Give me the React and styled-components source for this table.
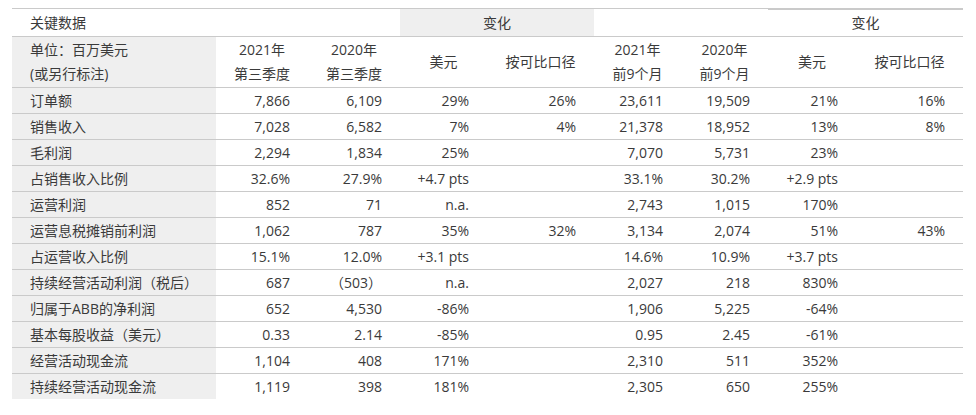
import React from "react"
import styled, { createGlobalStyle } from "styled-components"

const GlobalStyle = createGlobalStyle`
  body {
    margin: 0;
    background: #fff;
    font-family: "Open Sans", "Noto Sans CJK SC", sans-serif;
    color: #333;
  }
`

const Page = styled.div`
  padding: 8px 0 0 12px;
`

const Table = styled.table`
  width: 951px;
  table-layout: fixed;
  border-collapse: separate;
  border-spacing: 0;
  font-size: 14px;
  color: #3a3a3a;
`

const TopCell = styled.th`
  height: 26px;
  padding: 0 18px;
  font-weight: 400;
  text-align: ${(p) => (p.left ? "left" : "center")};
  background: ${(p) => (p.shaded ? "#efefef" : "#fff")};
  border-top: ${(p) => (p.thick ? "2px" : "1px")} solid #cacaca;
  border-bottom: 1px solid #cacaca;
  vertical-align: middle;
  line-height: 20px;
`

const HeadCell = styled.th`
  height: 50px;
  padding: 0 ${(p) => (p.left ? "18px" : "4px")};
  font-weight: 400;
  line-height: 24px;
  text-align: ${(p) => (p.left ? "left" : "center")};
  background: ${(p) => (p.shaded ? "#efefef" : "#fff")};
  border-bottom: 1px solid #cacaca;
  vertical-align: middle;
  white-space: nowrap;
`

const Cell = styled.td`
  height: 25px;
  padding: 0 18px 0 ${(p) => (p.label ? "18px" : "4px")};
  text-align: ${(p) => (p.label ? "left" : "right")};
  background: ${(p) => (p.label ? "#efefef" : "#fff")};
  border-bottom: ${(p) => (p.last ? "none" : "1px solid #cacaca")};
  vertical-align: middle;
  line-height: 20px;
  white-space: nowrap;
`

const widths = [204, 92, 92, 87, 107, 87, 87, 88, 107]

const rows = [
  ["订单额", "7,866", "6,109", "29%", "26%", "23,611", "19,509", "21%", "16%"],
  ["销售收入", "7,028", "6,582", "7%", "4%", "21,378", "18,952", "13%", "8%"],
  ["毛利润", "2,294", "1,834", "25%", "", "7,070", "5,731", "23%", ""],
  ["占销售收入比例", "32.6%", "27.9%", "+4.7 pts", "", "33.1%", "30.2%", "+2.9 pts", ""],
  ["运营利润", "852", "71", "n.a.", "", "2,743", "1,015", "170%", ""],
  ["运营息税摊销前利润", "1,062", "787", "35%", "32%", "3,134", "2,074", "51%", "43%"],
  ["占运营收入比例", "15.1%", "12.0%", "+3.1 pts", "", "14.6%", "10.9%", "+3.7 pts", ""],
  ["持续经营活动利润（税后）", "687", "（503）", "n.a.", "", "2,027", "218", "830%", ""],
  ["归属于ABB的净利润", "652", "4,530", "-86%", "", "1,906", "5,225", "-64%", ""],
  ["基本每股收益（美元）", "0.33", "2.14", "-85%", "", "0.95", "2.45", "-61%", ""],
  ["经营活动现金流", "1,104", "408", "171%", "", "2,310", "511", "352%", ""],
  ["持续经营活动现金流", "1,119", "398", "181%", "", "2,305", "650", "255%", ""],
]

const TwoLine = ({ a, b }) => (
  <>
    {a}
    <br />
    {b}
  </>
)

export default function App() {
  return (
    <>
      <GlobalStyle />
      <Page>
        <Table>
          <colgroup>
            {widths.map((w, i) => (
              <col key={i} style={{ width: w }} />
            ))}
          </colgroup>
          <thead>
            <tr>
              <TopCell left>关键数据</TopCell>
              <TopCell colSpan={2} />
              <TopCell colSpan={2} shaded>变化</TopCell>
              <TopCell colSpan={2} />
              <TopCell colSpan={2} thick>变化</TopCell>
            </tr>
            <tr>
              <HeadCell left shaded>
                <TwoLine a="单位：百万美元" b="(或另行标注)" />
              </HeadCell>
              <HeadCell><TwoLine a="2021年" b="第三季度" /></HeadCell>
              <HeadCell><TwoLine a="2020年" b="第三季度" /></HeadCell>
              <HeadCell>美元</HeadCell>
              <HeadCell>按可比口径</HeadCell>
              <HeadCell><TwoLine a="2021年" b="前9个月" /></HeadCell>
              <HeadCell><TwoLine a="2020年" b="前9个月" /></HeadCell>
              <HeadCell>美元</HeadCell>
              <HeadCell>按可比口径</HeadCell>
            </tr>
          </thead>
          <tbody>
            {rows.map((r, i) => (
              <tr key={i}>
                {r.map((v, j) => (
                  <Cell key={j} label={j === 0} last={i === rows.length - 1}>
                    {v}
                  </Cell>
                ))}
              </tr>
            ))}
          </tbody>
        </Table>
      </Page>
    </>
  )
}
